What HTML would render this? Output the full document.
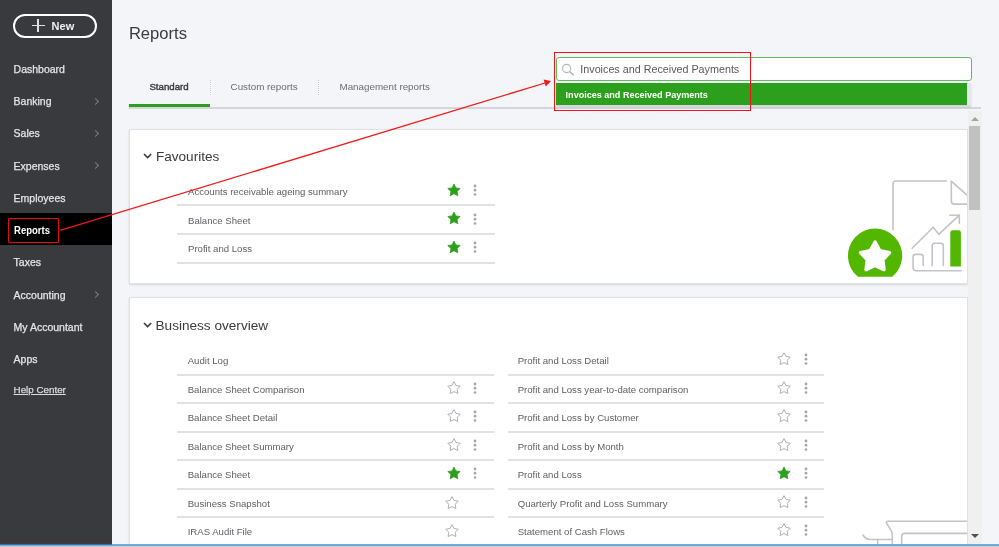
<!DOCTYPE html>
<html><head><meta charset="utf-8">
<style>
html,body{margin:0;padding:0;}
body{will-change:transform;width:999px;height:547px;overflow:hidden;position:relative;background:#f4f5f8;font-family:"Liberation Sans", sans-serif;}
.t{position:absolute;white-space:nowrap;line-height:1;}
.ic{position:absolute;}
.side{position:absolute;left:0;top:0;width:112px;height:547px;background:#393a3d;}
.nav{color:#e4e5e8;-webkit-text-stroke:0.25px #e4e5e8;}
.chev{position:absolute;width:4px;height:4px;border-right:1.4px solid #7a7c81;border-top:1.4px solid #7a7c81;transform:rotate(45deg);}
.card{position:absolute;background:#fff;border:1px solid #dfe1e5;box-shadow:0 1px 2px rgba(0,0,0,0.12);}
.div{position:absolute;height:2px;background:#e0e2e6;}
.lt{color:#5f6065;}
.dots{position:absolute;width:3px;}
.dots i{display:block;width:2.6px;height:2.6px;border-radius:50%;background:#8d9096;margin-bottom:1.8px;}
</style></head><body>
<div class="side"></div>
<div style="position:absolute;left:13.1px;top:14.1px;width:79.9px;height:20px;border:2px solid #fff;border-radius:12px;"></div>
<div style="position:absolute;left:31.5px;top:25.1px;width:13px;height:1.25px;background:#e0e0e0"></div>
<div style="position:absolute;left:37.4px;top:19.3px;width:1.25px;height:13px;background:#e0e0e0"></div>
<div class="t nav" style="left:51.6px;top:21.29px;font-size:11px;font-weight:700;color:#f0f0f0;-webkit-text-stroke:0">New</div>
<div style="position:absolute;left:0;top:213px;width:112px;height:32px;background:#000"></div>
<div class="t nav" style="left:13.6px;top:63.91px;font-size:10.5px;">Dashboard</div>
<div class="t nav" style="left:13.6px;top:96.16px;font-size:10.5px;">Banking</div>
<div class="chev" style="left:92.6px;top:98.8px"></div>
<div class="t nav" style="left:13.6px;top:128.41px;font-size:10.5px;">Sales</div>
<div class="chev" style="left:92.6px;top:131.0px"></div>
<div class="t nav" style="left:13.6px;top:160.66px;font-size:10.5px;">Expenses</div>
<div class="chev" style="left:92.6px;top:163.2px"></div>
<div class="t nav" style="left:13.6px;top:192.91px;font-size:10.5px;">Employees</div>
<div class="t " style="left:13.7px;top:225.28px;font-size:10.6px;font-weight:700;color:#fff;transform:scaleX(0.9);transform-origin:0 0">Reports</div>
<div class="t nav" style="left:13.6px;top:257.41px;font-size:10.5px;">Taxes</div>
<div class="t nav" style="left:13.6px;top:289.66px;font-size:10.5px;">Accounting</div>
<div class="chev" style="left:92.6px;top:292.2px"></div>
<div class="t nav" style="left:13.6px;top:321.91px;font-size:10.5px;">My Accountant</div>
<div class="t nav" style="left:13.6px;top:354.16px;font-size:10.5px;">Apps</div>
<div class="t " style="left:13.6px;top:385.20px;font-size:9.8px;color:#d9dadd;text-decoration:underline;-webkit-text-stroke:0.25px #d9dadd;">Help Center</div>
<div class="t " style="left:128.9px;top:25.95px;font-size:16.6px;color:#393a3d">Reports</div>
<div class="t " style="left:149.4px;top:82.19px;font-size:9.7px;color:#393a3d;-webkit-text-stroke:0.4px #393a3d">Standard</div>
<div class="t " style="left:230.6px;top:82.10px;font-size:9.8px;color:#6b6c72">Custom reports</div>
<div class="t " style="left:339.5px;top:82.10px;font-size:9.8px;color:#6b6c72">Management reports</div>
<div style="position:absolute;left:210px;top:80px;height:15px;border-left:1px dotted #c8cacf"></div>
<div style="position:absolute;left:318px;top:80px;height:15px;border-left:1px dotted #c8cacf"></div>
<div style="position:absolute;left:129px;top:107px;width:852px;height:2px;background:#d4d6db"></div>
<div style="position:absolute;left:129px;top:104px;width:81px;height:3px;background:#2ca01c"></div>
<div class="card" style="left:129px;top:129px;width:837px;height:153px"></div>
<div class="card" style="left:129px;top:297px;width:837px;height:300px"></div>
<svg class="ic" style="left:143.4px;top:153.2px" width="10" height="7" viewBox="0 0 10 7"><polyline points="1,1 4.6,4.6 8.2,1" fill="none" stroke="#393a3d" stroke-width="1.55"/></svg>
<div class="t " style="left:155.9px;top:150.19px;font-size:13.6px;color:#393a3d">Favourites</div>
<div class="t lt" style="left:188px;top:187.37px;font-size:9.6px;">Accounts receivable ageing summary</div>
<div class="div" style="left:177px;top:204.3px;width:318px"></div>
<svg class="ic" style="left:447px;top:182.79999999999998px" width="14" height="14" viewBox="0 0 14 14"><polygon points="7.00,1.00 8.88,4.91 13.18,5.49 10.04,8.49 10.82,12.76 7.00,10.70 3.18,12.76 3.96,8.49 0.82,5.49 5.12,4.91" fill="#2ca01c" stroke="#2ca01c" stroke-width="0.8" stroke-linejoin="round"/></svg>
<svg class="ic" style="left:473.30px;top:184.30px" width="4" height="13" viewBox="0 0 4 13"><circle cx="2" cy="2" r="1.4" fill="#a3a6ad"/><circle cx="2" cy="6.2" r="1.35" fill="#a3a6ad"/><circle cx="2" cy="10.5" r="1.35" fill="#a3a6ad"/></svg>
<div class="t lt" style="left:188px;top:215.87px;font-size:9.6px;">Balance Sheet</div>
<div class="div" style="left:177px;top:233.1px;width:318px"></div>
<svg class="ic" style="left:447px;top:211.29999999999998px" width="14" height="14" viewBox="0 0 14 14"><polygon points="7.00,1.00 8.88,4.91 13.18,5.49 10.04,8.49 10.82,12.76 7.00,10.70 3.18,12.76 3.96,8.49 0.82,5.49 5.12,4.91" fill="#2ca01c" stroke="#2ca01c" stroke-width="0.8" stroke-linejoin="round"/></svg>
<svg class="ic" style="left:473.30px;top:212.80px" width="4" height="13" viewBox="0 0 4 13"><circle cx="2" cy="2" r="1.4" fill="#a3a6ad"/><circle cx="2" cy="6.2" r="1.35" fill="#a3a6ad"/><circle cx="2" cy="10.5" r="1.35" fill="#a3a6ad"/></svg>
<div class="t lt" style="left:188px;top:244.37px;font-size:9.6px;">Profit and Loss</div>
<div class="div" style="left:177px;top:261.8px;width:318px"></div>
<svg class="ic" style="left:447px;top:239.79999999999998px" width="14" height="14" viewBox="0 0 14 14"><polygon points="7.00,1.00 8.88,4.91 13.18,5.49 10.04,8.49 10.82,12.76 7.00,10.70 3.18,12.76 3.96,8.49 0.82,5.49 5.12,4.91" fill="#2ca01c" stroke="#2ca01c" stroke-width="0.8" stroke-linejoin="round"/></svg>
<svg class="ic" style="left:473.30px;top:241.30px" width="4" height="13" viewBox="0 0 4 13"><circle cx="2" cy="2" r="1.4" fill="#a3a6ad"/><circle cx="2" cy="6.2" r="1.35" fill="#a3a6ad"/><circle cx="2" cy="10.5" r="1.35" fill="#a3a6ad"/></svg>
<svg class="ic" style="left:143.4px;top:322.2px" width="10" height="7" viewBox="0 0 10 7"><polyline points="1,1 4.6,4.6 8.2,1" fill="none" stroke="#393a3d" stroke-width="1.55"/></svg>
<div class="t " style="left:155.5px;top:319.29px;font-size:13.6px;color:#393a3d">Business overview</div>
<div class="t lt" style="left:187.7px;top:356.27px;font-size:9.6px;">Audit Log</div>
<div class="div" style="left:177px;top:373.7px;width:317px"></div>
<div class="t lt" style="left:517.7px;top:356.27px;font-size:9.6px;">Profit and Loss Detail</div>
<div class="div" style="left:508px;top:373.7px;width:316px"></div>
<svg class="ic" style="left:776.00px;top:351.10px" width="16" height="16" viewBox="0 0 16 16"><polygon points="8.00,1.65 10.00,5.45 14.23,6.18 11.23,9.25 11.85,13.50 8.00,11.60 4.15,13.50 4.77,9.25 1.77,6.18 6.00,5.45" fill="none" stroke="#a9acb2" stroke-width="0.95" stroke-linejoin="round"/></svg>
<svg class="ic" style="left:804.00px;top:353.20px" width="4" height="13" viewBox="0 0 4 13"><circle cx="2" cy="2" r="1.4" fill="#a3a6ad"/><circle cx="2" cy="6.2" r="1.35" fill="#a3a6ad"/><circle cx="2" cy="10.5" r="1.35" fill="#a3a6ad"/></svg>
<div class="t lt" style="left:187.7px;top:384.77px;font-size:9.6px;">Balance Sheet Comparison</div>
<div class="div" style="left:177px;top:402.2px;width:317px"></div>
<svg class="ic" style="left:446.00px;top:379.60px" width="16" height="16" viewBox="0 0 16 16"><polygon points="8.00,1.65 10.00,5.45 14.23,6.18 11.23,9.25 11.85,13.50 8.00,11.60 4.15,13.50 4.77,9.25 1.77,6.18 6.00,5.45" fill="none" stroke="#a9acb2" stroke-width="0.95" stroke-linejoin="round"/></svg>
<svg class="ic" style="left:473.30px;top:381.70px" width="4" height="13" viewBox="0 0 4 13"><circle cx="2" cy="2" r="1.4" fill="#a3a6ad"/><circle cx="2" cy="6.2" r="1.35" fill="#a3a6ad"/><circle cx="2" cy="10.5" r="1.35" fill="#a3a6ad"/></svg>
<div class="t lt" style="left:517.7px;top:384.77px;font-size:9.6px;">Profit and Loss year-to-date comparison</div>
<div class="div" style="left:508px;top:402.2px;width:316px"></div>
<svg class="ic" style="left:776.00px;top:379.60px" width="16" height="16" viewBox="0 0 16 16"><polygon points="8.00,1.65 10.00,5.45 14.23,6.18 11.23,9.25 11.85,13.50 8.00,11.60 4.15,13.50 4.77,9.25 1.77,6.18 6.00,5.45" fill="none" stroke="#a9acb2" stroke-width="0.95" stroke-linejoin="round"/></svg>
<svg class="ic" style="left:804.00px;top:381.70px" width="4" height="13" viewBox="0 0 4 13"><circle cx="2" cy="2" r="1.4" fill="#a3a6ad"/><circle cx="2" cy="6.2" r="1.35" fill="#a3a6ad"/><circle cx="2" cy="10.5" r="1.35" fill="#a3a6ad"/></svg>
<div class="t lt" style="left:187.7px;top:413.27px;font-size:9.6px;">Balance Sheet Detail</div>
<div class="div" style="left:177px;top:430.7px;width:317px"></div>
<svg class="ic" style="left:446.00px;top:408.10px" width="16" height="16" viewBox="0 0 16 16"><polygon points="8.00,1.65 10.00,5.45 14.23,6.18 11.23,9.25 11.85,13.50 8.00,11.60 4.15,13.50 4.77,9.25 1.77,6.18 6.00,5.45" fill="none" stroke="#a9acb2" stroke-width="0.95" stroke-linejoin="round"/></svg>
<svg class="ic" style="left:473.30px;top:410.20px" width="4" height="13" viewBox="0 0 4 13"><circle cx="2" cy="2" r="1.4" fill="#a3a6ad"/><circle cx="2" cy="6.2" r="1.35" fill="#a3a6ad"/><circle cx="2" cy="10.5" r="1.35" fill="#a3a6ad"/></svg>
<div class="t lt" style="left:517.7px;top:413.27px;font-size:9.6px;">Profit and Loss by Customer</div>
<div class="div" style="left:508px;top:430.7px;width:316px"></div>
<svg class="ic" style="left:776.00px;top:408.10px" width="16" height="16" viewBox="0 0 16 16"><polygon points="8.00,1.65 10.00,5.45 14.23,6.18 11.23,9.25 11.85,13.50 8.00,11.60 4.15,13.50 4.77,9.25 1.77,6.18 6.00,5.45" fill="none" stroke="#a9acb2" stroke-width="0.95" stroke-linejoin="round"/></svg>
<svg class="ic" style="left:804.00px;top:410.20px" width="4" height="13" viewBox="0 0 4 13"><circle cx="2" cy="2" r="1.4" fill="#a3a6ad"/><circle cx="2" cy="6.2" r="1.35" fill="#a3a6ad"/><circle cx="2" cy="10.5" r="1.35" fill="#a3a6ad"/></svg>
<div class="t lt" style="left:187.7px;top:441.77px;font-size:9.6px;">Balance Sheet Summary</div>
<div class="div" style="left:177px;top:459.2px;width:317px"></div>
<svg class="ic" style="left:446.00px;top:436.60px" width="16" height="16" viewBox="0 0 16 16"><polygon points="8.00,1.65 10.00,5.45 14.23,6.18 11.23,9.25 11.85,13.50 8.00,11.60 4.15,13.50 4.77,9.25 1.77,6.18 6.00,5.45" fill="none" stroke="#a9acb2" stroke-width="0.95" stroke-linejoin="round"/></svg>
<svg class="ic" style="left:473.30px;top:438.70px" width="4" height="13" viewBox="0 0 4 13"><circle cx="2" cy="2" r="1.4" fill="#a3a6ad"/><circle cx="2" cy="6.2" r="1.35" fill="#a3a6ad"/><circle cx="2" cy="10.5" r="1.35" fill="#a3a6ad"/></svg>
<div class="t lt" style="left:517.7px;top:441.77px;font-size:9.6px;">Profit and Loss by Month</div>
<div class="div" style="left:508px;top:459.2px;width:316px"></div>
<svg class="ic" style="left:776.00px;top:436.60px" width="16" height="16" viewBox="0 0 16 16"><polygon points="8.00,1.65 10.00,5.45 14.23,6.18 11.23,9.25 11.85,13.50 8.00,11.60 4.15,13.50 4.77,9.25 1.77,6.18 6.00,5.45" fill="none" stroke="#a9acb2" stroke-width="0.95" stroke-linejoin="round"/></svg>
<svg class="ic" style="left:804.00px;top:438.70px" width="4" height="13" viewBox="0 0 4 13"><circle cx="2" cy="2" r="1.4" fill="#a3a6ad"/><circle cx="2" cy="6.2" r="1.35" fill="#a3a6ad"/><circle cx="2" cy="10.5" r="1.35" fill="#a3a6ad"/></svg>
<div class="t lt" style="left:187.7px;top:470.27px;font-size:9.6px;">Balance Sheet</div>
<div class="div" style="left:177px;top:487.7px;width:317px"></div>
<svg class="ic" style="left:447px;top:465.7px" width="14" height="14" viewBox="0 0 14 14"><polygon points="7.00,1.00 8.88,4.91 13.18,5.49 10.04,8.49 10.82,12.76 7.00,10.70 3.18,12.76 3.96,8.49 0.82,5.49 5.12,4.91" fill="#2ca01c" stroke="#2ca01c" stroke-width="0.8" stroke-linejoin="round"/></svg>
<svg class="ic" style="left:473.30px;top:467.20px" width="4" height="13" viewBox="0 0 4 13"><circle cx="2" cy="2" r="1.4" fill="#a3a6ad"/><circle cx="2" cy="6.2" r="1.35" fill="#a3a6ad"/><circle cx="2" cy="10.5" r="1.35" fill="#a3a6ad"/></svg>
<div class="t lt" style="left:517.7px;top:470.27px;font-size:9.6px;">Profit and Loss</div>
<div class="div" style="left:508px;top:487.7px;width:316px"></div>
<svg class="ic" style="left:777px;top:465.7px" width="14" height="14" viewBox="0 0 14 14"><polygon points="7.00,1.00 8.88,4.91 13.18,5.49 10.04,8.49 10.82,12.76 7.00,10.70 3.18,12.76 3.96,8.49 0.82,5.49 5.12,4.91" fill="#2ca01c" stroke="#2ca01c" stroke-width="0.8" stroke-linejoin="round"/></svg>
<svg class="ic" style="left:804.00px;top:467.20px" width="4" height="13" viewBox="0 0 4 13"><circle cx="2" cy="2" r="1.4" fill="#a3a6ad"/><circle cx="2" cy="6.2" r="1.35" fill="#a3a6ad"/><circle cx="2" cy="10.5" r="1.35" fill="#a3a6ad"/></svg>
<div class="t lt" style="left:187.7px;top:498.77px;font-size:9.6px;">Business Snapshot</div>
<div class="div" style="left:177px;top:516.2px;width:317px"></div>
<svg class="ic" style="left:444.00px;top:494.90px" width="16" height="16" viewBox="0 0 16 16"><polygon points="8.00,1.65 10.00,5.45 14.23,6.18 11.23,9.25 11.85,13.50 8.00,11.60 4.15,13.50 4.77,9.25 1.77,6.18 6.00,5.45" fill="none" stroke="#a9acb2" stroke-width="0.95" stroke-linejoin="round"/></svg>
<div class="t lt" style="left:517.7px;top:498.77px;font-size:9.6px;">Quarterly Profit and Loss Summary</div>
<div class="div" style="left:508px;top:516.2px;width:316px"></div>
<svg class="ic" style="left:776.00px;top:493.60px" width="16" height="16" viewBox="0 0 16 16"><polygon points="8.00,1.65 10.00,5.45 14.23,6.18 11.23,9.25 11.85,13.50 8.00,11.60 4.15,13.50 4.77,9.25 1.77,6.18 6.00,5.45" fill="none" stroke="#a9acb2" stroke-width="0.95" stroke-linejoin="round"/></svg>
<svg class="ic" style="left:804.00px;top:495.70px" width="4" height="13" viewBox="0 0 4 13"><circle cx="2" cy="2" r="1.4" fill="#a3a6ad"/><circle cx="2" cy="6.2" r="1.35" fill="#a3a6ad"/><circle cx="2" cy="10.5" r="1.35" fill="#a3a6ad"/></svg>
<div class="t lt" style="left:187.7px;top:527.27px;font-size:9.6px;">IRAS Audit File</div>
<svg class="ic" style="left:444.00px;top:523.40px" width="16" height="16" viewBox="0 0 16 16"><polygon points="8.00,1.65 10.00,5.45 14.23,6.18 11.23,9.25 11.85,13.50 8.00,11.60 4.15,13.50 4.77,9.25 1.77,6.18 6.00,5.45" fill="none" stroke="#a9acb2" stroke-width="0.95" stroke-linejoin="round"/></svg>
<div class="t lt" style="left:517.7px;top:527.27px;font-size:9.6px;">Statement of Cash Flows</div>
<svg class="ic" style="left:776.00px;top:522.10px" width="16" height="16" viewBox="0 0 16 16"><polygon points="8.00,1.65 10.00,5.45 14.23,6.18 11.23,9.25 11.85,13.50 8.00,11.60 4.15,13.50 4.77,9.25 1.77,6.18 6.00,5.45" fill="none" stroke="#a9acb2" stroke-width="0.95" stroke-linejoin="round"/></svg>
<svg class="ic" style="left:804.00px;top:524.20px" width="4" height="13" viewBox="0 0 4 13"><circle cx="2" cy="2" r="1.4" fill="#a3a6ad"/><circle cx="2" cy="6.2" r="1.35" fill="#a3a6ad"/><circle cx="2" cy="10.5" r="1.35" fill="#a3a6ad"/></svg>
<svg class="ic" style="left:840px;top:170px" width="127" height="113" viewBox="840 170 127 113">
<path d="M857.9,276.8 A27.15,27.15 0 1 1 892.2,276.8 Z" fill="#53b700"/>
<polygon points="875.05,242.05 879.87,250.72 889.60,252.62 882.85,259.88 884.04,269.73 875.05,265.55 866.06,269.73 867.25,259.88 860.50,252.62 870.23,250.72" fill="#fff" stroke="#fff" stroke-width="3.4" stroke-linejoin="round"/>
<g fill="none" stroke="#c1c4ca" stroke-width="1.6" stroke-linecap="round" stroke-linejoin="round">
<path d="M893,229.8 V184 Q893,181 896,181 H946.3"/>
<path d="M951.3,181.3 V201 Q951.3,204.1 954.4,204.1 H972"/>
<path d="M951.8,181.6 L972,199.6"/>
<path d="M912.1,248.3 L933.2,227.2 L938.8,234.3 L959.3,215.2"/>
<path d="M949.8,215.2 H959.3 V223.2"/>
<path d="M923.2,265.4 V256.8 Q923.2,254.4 920.8,254.4 H915.5 Q913.1,254.4 913.1,256.8 V267.8 Q913.1,270.8 916.1,270.8 H961"/>
<path d="M932.2,265.4 V245.8 Q932.2,243.3 934.7,243.3 H940.8 Q943.3,243.3 943.3,245.8 V265.4"/>
</g>
<path d="M950.3,266.6 V232.6 Q950.3,230.3 952.6,230.3 H958.6 Q960.9,230.3 960.9,232.6 V266.6 Z" fill="#53b700"/>
</svg>
<svg class="ic" style="left:840px;top:500px" width="127" height="47" viewBox="840 500 127 47">
<g fill="none" stroke="#c1c4ca" stroke-width="1.6" stroke-linecap="round" stroke-linejoin="round">
<path d="M972,521.3 H888.2 Q885.4,521.3 886.9,523.8 L891.2,530.6 Q892.3,532.3 892.3,534.5 V550"/>
<path d="M863,535 Q865.5,539.5 870.5,539.5 H892.3"/>
<path d="M877.7,539.5 V550"/>
<path d="M901.7,550 V536.4 Q901.7,533.4 904.7,533.4 H972"/>
</g></svg>
<div style="position:absolute;left:968.2px;top:111px;width:13.5px;height:436px;background:#f0f0f1"></div>
<div style="position:absolute;left:968.9px;top:126.4px;width:10.9px;height:83.8px;background:#c1c1c1"></div>
<div style="position:absolute;left:971px;top:117px;width:0;height:0;border-left:4px solid transparent;border-right:4px solid transparent;border-bottom:4px solid #a3a3a3"></div>
<div style="position:absolute;left:971px;top:534px;width:0;height:0;border-left:4px solid transparent;border-right:4px solid transparent;border-top:4px solid #505050"></div>
<div style="position:absolute;left:555.6px;top:56.8px;width:414px;height:22.2px;background:#fff;border:1.2px solid #5fbb5f;border-radius:3px"></div>
<svg class="ic" style="left:561px;top:63px" width="14" height="14" viewBox="0 0 14 14"><circle cx="5.6" cy="5.5" r="4.1" fill="none" stroke="#b3b7be" stroke-width="1.15"/><line x1="8.6" y1="8.6" x2="12.4" y2="11.9" stroke="#b3b7be" stroke-width="1.4" stroke-linecap="round"/></svg>
<div class="t " style="left:580.3px;top:63.80px;font-size:10.75px;color:#58595d">Invoices and Received Payments</div>
<div style="position:absolute;left:556px;top:83px;width:415px;height:22px;background:#e3e8ef;box-shadow:0 2px 2px rgba(0,0,0,0.15)"></div>
<div style="position:absolute;left:556px;top:83px;width:411px;height:21.5px;background:#2ca01c"></div>
<div class="t " style="left:565.6px;top:90.84px;font-size:9.05px;color:#fff;font-weight:700">Invoices and Received Payments</div>
<div style="position:absolute;left:553.8px;top:51.7px;width:195.1px;height:57.2px;border:1.5px solid #f0141a"></div>
<div style="position:absolute;left:7.6px;top:217.9px;width:49px;height:22.9px;border:1.6px solid #e80a0a;border-radius:1px"></div>
<svg class="ic" style="left:0;top:0" width="999" height="547"><line x1="60.2" y1="230.4" x2="545" y2="83" stroke="#f01a1a" stroke-width="1.3"/><polygon points="551,81 543.6,79.4 545.8,86.6" fill="#f01a1a"/></svg>
<div style="position:absolute;left:0;top:543px;width:112px;height:1px;background:#45393a"></div>
<div style="position:absolute;left:0;top:544px;width:112px;height:1px;background:#2d74b6"></div>
<div style="position:absolute;left:112px;top:544px;width:887px;height:1px;background:#64ace4"></div>
<div style="position:absolute;left:0;top:545px;width:999px;height:1px;background:#7ba6c8"></div>
<div style="position:absolute;left:0;top:546px;width:999px;height:1px;background:#d5c9c0"></div>
</body></html>
